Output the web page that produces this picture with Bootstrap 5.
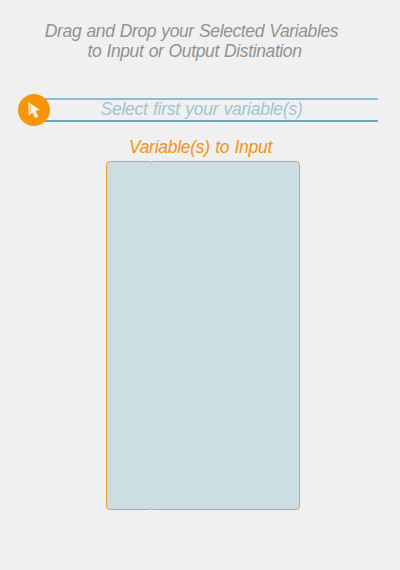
<!DOCTYPE html>
<html lang="en">
<head>
<meta charset="utf-8">
<meta name="viewport" content="width=device-width, initial-scale=1">
<title>Variables</title>
<link rel="stylesheet" href="https://cdn.jsdelivr.net/npm/bootstrap@5.3.0/dist/css/bootstrap.min.css">
<style>
body{background:#f0f0f0;font-family:"Liberation Sans",Arial,sans-serif;font-style:italic;font-size:17.5px;line-height:20px;height:570px;overflow:hidden}
.intro{color:#929292;padding-top:21px;padding-right:17px;letter-spacing:-.38px;word-spacing:.7px}
.intro-second{padding-left:6px}
.hint-row{margin:33px 22px 0 18px;height:32px}
.hint{height:24px;margin-left:-6px;border-top:2px solid #8abdd1;border-bottom:2px solid #65aac4;color:#a1c4d2;padding-right:19px;line-height:18px;letter-spacing:-.25px;word-spacing:.7px}
.pointer{width:32px;height:32px;z-index:1}
.target-title{color:#f39314;margin-top:11px;font-size:17.5px;line-height:20px;letter-spacing:-.27px;word-spacing:.7px;padding-left:1px}
.drop-zone{width:194px;height:349px;margin:4px 0 0 106px;background:#cbdee3;border:1px solid #f0a028;border-radius:4px}
.notch{left:43px;width:3px;height:2px;background:linear-gradient(90deg,#e8bd78 1px,#f0a028 1px 2px,#e8bd78 2px)}
.notch::after{content:"";position:absolute;left:1px;width:1px;height:1px;background:#f0d9b4}
.notch-top{top:-1px;clip-path:polygon(0 0,3px 0,3px 1px,2px 1px,2px 2px,1px 2px,1px 1px,0 1px)}
.notch-bottom{bottom:-1px;clip-path:polygon(1px 0,2px 0,2px 1px,3px 1px,3px 2px,0 2px,0 1px,1px 1px)}
.notch-top::after{top:0}.notch-bottom::after{bottom:0}
</style>
<script src="https://cdn.jsdelivr.net/npm/bootstrap@5.3.0/dist/js/bootstrap.bundle.min.js"></script>
</head>
<body>
<main class="d-flex flex-column">
  <header class="intro text-center"><div>Drag and Drop your Selected Variables</div><div class="intro-second">to Input or Output Distination</div></header>
  <div class="hint-row d-flex align-items-center">
    <svg class="pointer flex-shrink-0 position-relative" viewBox="0 0 32 32" aria-hidden="true">
      <circle cx="16" cy="16" r="16" fill="#f7960b"/>
      <path d="M3 14 11 6M4 21 19 6M8 25 27 7M15 27 28 15" stroke="#e88d0c" stroke-width="1.3" opacity=".5"/>
      <path d="M10.2 8.3 21.6 15.6 17.6 17 20.4 22.4 17.2 24 14.4 18.8 10.8 21.4Z" fill="#fff3df"/>
      <path d="M12.4 10.8V18.6" stroke="#f7a52e" stroke-width=".7"/>
    </svg>
    <div class="hint flex-grow-1 text-center">Select first your variable(s)</div>
  </div>
  <h1 class="target-title text-center mb-0 fw-normal">Variable(s) to Input</h1>
  <section class="drop-zone position-relative"><i class="notch notch-top position-absolute"></i><i class="notch notch-bottom position-absolute"></i></section>
</main>
</body>
</html>
